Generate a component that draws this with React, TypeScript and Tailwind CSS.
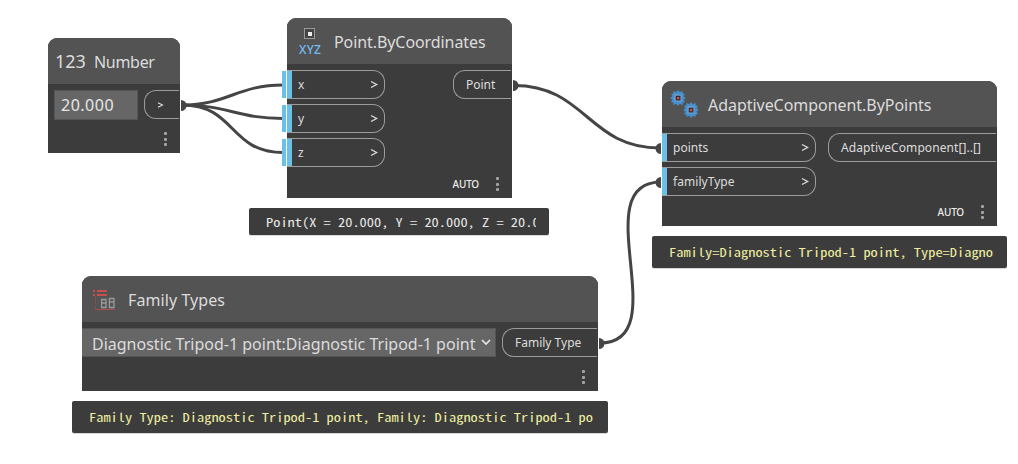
import type { ReactNode } from "react";

const SANS = "font-['Noto_Sans',sans-serif]";

function Node({ box, icon, title, children, menu, auto }: {
  box: string; icon: ReactNode; title: ReactNode; children: ReactNode; menu: string; auto?: boolean;
}) {
  return (
    <section className={`absolute flex flex-col overflow-hidden rounded-t-[9px] bg-[#3c3c3c] ${box}`}>
      <header className="flex h-[46px] shrink-0 items-center bg-[#535353]">
        {icon}
        {title}
      </header>
      <div className="flex grow items-start pt-[6px]">{children}</div>
      <footer className={`flex items-center justify-end ${menu}`}>
        {auto && <span className="mr-[17px] text-[10px] leading-[12px] font-medium tracking-[-0.2px] text-[#ececec]">AUTO</span>}
        <span className="flex flex-col gap-[2.5px]">
          <i className="size-[3px] rounded-[1px] bg-[#a3a3a3]" />
          <i className="size-[3px] rounded-[1px] bg-[#a3a3a3]" />
          <i className="size-[3px] rounded-[1px] bg-[#a3a3a3]" />
        </span>
      </footer>
    </section>
  );
}

function Chevron() {
  return (
    <svg width="8" height="9" viewBox="0 0 8 9" fill="none" stroke="#dcdcdc" strokeWidth="1.4">
      <path d="M1 1.5 L6.6 4.5 L1 7.5" />
    </svg>
  );
}

function Input({ name, width, text }: { name: string; width: string; text?: string }) {
  return (
    <div className={`flex h-[29px] items-center rounded-r-[12px] border border-l-0 border-[#9c9c9c] pr-[6px] ${width}`}>
      <i className="h-[27px] w-[5px] bg-[#6ac0e7]" />
      <span className={`ml-[6px] grow text-[12px] leading-none text-[#dcdcdc] ${text ?? ""}`}>{name}</span>
      <Chevron />
    </div>
  );
}

function Output({ children, width }: { children: ReactNode; width: string }) {
  return (
    <div className={`mr-px ml-auto flex h-[29px] shrink-0 items-center rounded-l-[12px] border border-r-0 border-[#9c9c9c] pl-[12px] text-[12px] leading-none whitespace-nowrap text-[#dcdcdc] ${width}`}>
      {children}
    </div>
  );
}

function Preview({ box, children }: { box: string; children: string }) {
  return (
    <div className={`absolute flex items-center rounded-[2px] bg-[#3c3c3c] pr-[13px] pl-[17px] shadow-[0_1px_0_#d8d8d8] ${box}`}>
      <div className="grow overflow-hidden font-['Noto_Sans_Mono_CJK_SC','Liberation_Mono',monospace] text-[12px] leading-[18px] whitespace-pre">
        <span className="inline-block origin-left scale-x-[1.2]">{children}</span>
      </div>
    </div>
  );
}

function Gears() {
  const gear = "M7 0L8.800 2.200L11.500 1L11.800 3.600L14 4L12.600 6.200L14.800 8L12.600 9.800L14 12L11.800 12.400L11.500 15L8.800 13.800L7 16L5.200 13.800L2.500 15L2.200 12.400L0 12L1.400 9.800L-.8 8L1.400 6.200L0 4L2.200 3.600L2.500 1L5.200 2.200Z";
  return (
    <svg className="mt-px ml-[9px] shrink-0 overflow-visible" width="28" height="30" viewBox="0 0 28 30">
      {[[0, 0], [13, 12]].map(([x, y]) => (
        <g key={x} transform={`translate(${x} ${y})`}>
          <path d={gear} fill="#468fce" />
          <rect x="3.500" y="4.500" width="7" height="7" fill="#7aa3c8" />
          <rect x="4.700" y="5.700" width="4.800" height="4.800" fill="#2c323c" />
          <rect x="6" y="7" width="2.300" height="2.200" fill="#e04a3f" />
        </g>
      ))}
    </svg>
  );
}

function FamilyIcon() {
  return (
    <svg className="mt-px ml-[10px] shrink-0" width="24" height="24" viewBox="0 0 24 24" fill="none">
      <path d="M1 3h2m2 0h10M1 7h2m2 0h10" stroke="#c94f4c" strokeWidth="2" />
      <path d="M3.5 9v12" stroke="#b54b49" strokeDasharray="1 1" />
      <path d="M3 21.5h20" stroke="#a94c4b" />
      <path d="M9.600 11.500h4.400v8h-4.400zM9.600 15h4.400M17.400 10.500h4.600v9h-4.600zM17.400 14h4.600" stroke="#9a9a9a" strokeWidth="1.300" />
    </svg>
  );
}

const title = "whitespace-nowrap pt-[2px] text-[16px] leading-none text-[#dcdcdc]";

export default function App() {
  return (
    <main className={`relative h-[464px] w-[1018px] overflow-hidden bg-white ${SANS}`}>
      <svg className="absolute inset-0" width="1018" height="464" fill="none" stroke="#454545" strokeWidth="3">
        <path d="M182 105C228 105 237 85 283 85" />
        <path d="M182 105C228 105 237 118.500 283 118.500" />
        <path d="M182 105C236 105 229 152.500 283 152.500" />
        <path d="M514 85.500C586 85.500 588 148 660 148" />
        <path d="M600 343C677 343 584 182 661 182" />
        <g fill="#454545" stroke="none">
          <path d="M181 100a5.500 5.500 0 0 1 0 11zM513 80a5.500 5.500 0 0 1 0 11zM599 338a5.500 5.500 0 0 1 0 11z" />
          <path d="M661 143a5.500 5.500 0 0 0 0 11zM661 177a5.500 5.500 0 0 0 0 11z" />
        </g>
        <path d="M284 71v27M284 105v27M284 139v27" stroke="#6ac0e7" strokeWidth="4" />
      </svg>

      <Node
        box="left-[48px] top-[38px] h-[115px] w-[132px]"
        icon={<span className="ml-[7px] w-[39px] text-[18px] leading-none text-[#dcdcdc]">123</span>}
        title={<h2 className={`tracking-[-0.3px] ${title}`}>Number</h2>}
        menu="pr-[13px] pb-[7px]"
      >
        <div className="ml-[6px] flex h-[30px] w-[84px] items-center border border-[#555] bg-[#666] pl-[6px] text-[16px] leading-none tracking-[0.5px] text-[#e6e6e6]">20.000</div>
        <div className="mr-px ml-auto flex h-[29px] w-[35px] items-center rounded-l-[12px] border border-r-0 border-[#9c9c9c] pl-[12px]">
          <svg width="7" height="6" fill="none" stroke="#dcdcdc" strokeWidth="1.1"><path d="M1 .8 5.500 3 1 5.200" /></svg>
        </div>
      </Node>

      <Node
        box="left-[287px] top-[18px] h-[180px] w-[225px]"
        icon={
          <div className="mt-[2px] ml-[11px] flex w-[36px] flex-col text-[12px] leading-[14px] font-medium tracking-[0.3px] text-[#72bdf2]">
            <svg className="ml-[6px]" width="11" height="11"><rect x=".5" y=".5" width="10" height="10" fill="#444" stroke="#999" /><rect x="4" y="4" width="4" height="4" fill="#eee" /></svg>
            <span className="mt-[4px] ml-px">XYZ</span>
          </div>
        }
        title={<h2 className={`tracking-[-0.08px] ${title}`}>Point.ByCoordinates</h2>}
        menu="pr-[13px] pb-[7px]"
        auto
      >
        <div className="flex flex-col gap-[5px]">
          <Input name="x" width="w-[98px]" />
          <Input name="y" width="w-[98px]" />
          <Input name="z" width="w-[98px]" />
        </div>
        <Output width="w-[58px]">Point</Output>
      </Node>

      <Node
        box="left-[662px] top-[81px] h-[145px] w-[335px]"
        icon={<Gears />}
        title={<h2 className={`ml-[9px] tracking-[-0.04px] ${title}`}>AdaptiveComponent.ByPoints</h2>}
        menu="pr-[13px] pb-[7px]"
        auto
      >
        <div className="flex flex-col gap-[5px]">
          <Input name="points" width="w-[154px]" />
          <Input name="familyType" width="w-[154px]" text="tracking-[0.05px]" />
        </div>
        <Output width="w-[168px]"><span className="tracking-[0.08px]">AdaptiveComponent[]..[]</span></Output>
      </Node>

      <Node
        box="left-[82px] top-[276px] h-[115px] w-[516px]"
        icon={<FamilyIcon />}
        title={<h2 className={`ml-[12px] tracking-[0.08px] ${title}`}>Family Types</h2>}
        menu="pr-[13px] pb-[7px]"
      >
        <div className="flex h-[29px] w-[414px] items-center justify-between border border-l-0 border-[#555] bg-[#666] pr-[4px] pl-[10px] text-[16px] leading-none whitespace-nowrap text-[#dcdcdc]">
          <span className="pt-[2px]">Diagnostic Tripod-1 point:Diagnostic Tripod-1 point</span>
          <svg width="10" height="7" fill="none" stroke="#e6e6e6" strokeWidth="1.7"><path d="M1 1l4 4 4-4" /></svg>
        </div>
        <Output width="w-[95px]">Family Type</Output>
      </Node>

      <Preview box="left-[249px] top-[208px] h-[27px] w-[300px] text-[#e6e6e6]">Point(X = 20.000, Y = 20.000, Z = 20.000)</Preview>
      <Preview box="left-[652px] top-[236px] h-[32px] w-[355px] text-[#eeeea0]">Family=Diagnostic Tripod-1 point, Type=Diagnostic</Preview>
      <Preview box="left-[72px] top-[401px] h-[32px] w-[536px] text-[#eeeea0]">Family Type: Diagnostic Tripod-1 point, Family: Diagnostic Tripod-1 point</Preview>
    </main>
  );
}
